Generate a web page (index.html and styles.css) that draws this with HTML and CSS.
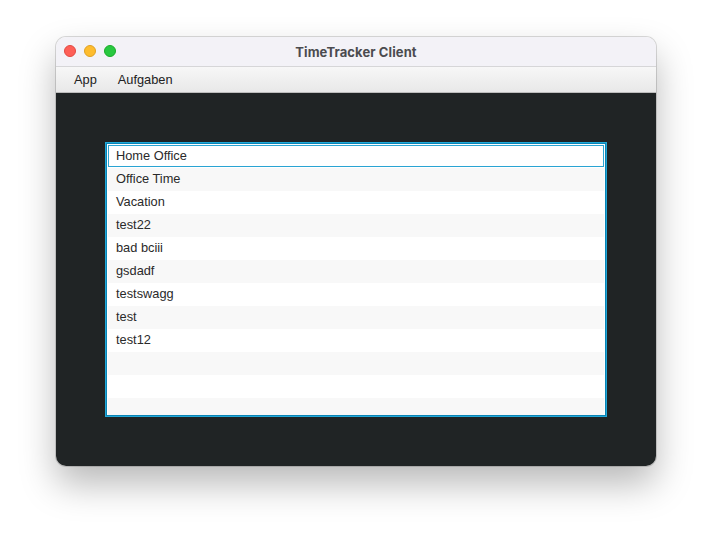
FILE: index.html
```html
<!DOCTYPE html>
<html>
<head>
<meta charset="utf-8">
<link rel="stylesheet" href="styles.css">
</head>
<body>
<div class="window">
  <div class="titlebar">
    <div class="lights">
      <span class="light red"></span>
      <span class="light yellow"></span>
      <span class="light green"></span>
    </div>
    <div class="title">TimeTracker Client</div>
  </div>
  <div class="menubar">
    <span class="menu">App</span>
    <span class="menu">Aufgaben</span>
  </div>
  <div class="content">
    <div class="list">
      <div class="row focused">Home Office</div>
      <div class="row">Office Time</div>
      <div class="row">Vacation</div>
      <div class="row">test22</div>
      <div class="row">bad bciii</div>
      <div class="row">gsdadf</div>
      <div class="row">testswagg</div>
      <div class="row">test</div>
      <div class="row">test12</div>
      <div class="row"></div>
      <div class="row"></div>
      <div class="row"></div>
    </div>
  </div>
</div>
</body>
</html>
```

FILE: styles.css
```css
html, body {
  margin: 0;
  padding: 0;
  background: #ffffff;
}
body {
  padding: 37px 0 0 56px;
  height: 540px;
  box-sizing: border-box;
  font-family: "Inter", "Liberation Sans", sans-serif;
}
.window {
  width: 600px;
  height: 429px;
  border-radius: 10px;
  overflow: hidden;
  display: flex;
  flex-direction: column;
  box-shadow: 0 0 0 1px rgba(0,0,0,0.14), 0 18px 36px rgba(0,0,0,0.28);
}
.titlebar {
  height: 29px;
  background: #f3f2f7;
  border-bottom: 1px solid #d6d6d8;
  position: relative;
  display: flex;
  align-items: center;
  justify-content: center;
  flex-shrink: 0;
}
.lights {
  position: absolute;
  left: 8px;
  top: 8px;
  display: flex;
  gap: 8px;
}
.light {
  width: 12px;
  height: 12px;
  border-radius: 50%;
  box-sizing: border-box;
}
.red { background: #fe5f57; border: 0.5px solid #e14942; }
.yellow { background: #febc2e; border: 0.5px solid #dfa123; }
.green { background: #28c840; border: 0.5px solid #1aab29; }
.title {
  font-size: 13px;
  font-weight: 700;
  color: #4b4b4f;
  letter-spacing: 0.1px;
}
.menubar {
  height: 25px;
  background: linear-gradient(#f7f7f7, #e8e8e8);
  border-bottom: 1px solid #bdbdbd;
  display: flex;
  align-items: center;
  padding-left: 18px;
  gap: 21px;
  flex-shrink: 0;
}
.menu {
  font-family: "Liberation Sans", sans-serif;
  font-size: 12.8px;
  color: #222;
}
.content {
  flex: 1;
  min-height: 0;
  background: #202425;
  padding: 50px;
  display: flex;
}
.list {
  flex: 1;
  min-height: 0;
  background: #ffffff;
  border: 1px solid #0a84b5;
  box-shadow: 0 0 0 1px #22a8d8;
  overflow: hidden;
  padding: 1px;
}
.row {
  height: 23px;
  line-height: 22px;
  padding-left: 8px;
  font-family: "Liberation Sans", sans-serif;
  font-size: 12.8px;
  color: #2a2a2a;
  box-sizing: border-box;
}
.row:nth-child(even) {
  background: #f8f8f8;
}
.row.focused {
  border: 1px solid #2aa4d3;
  padding-left: 7px;
  line-height: 20px;
  height: 22px;
  margin-bottom: 1px;
}
```
